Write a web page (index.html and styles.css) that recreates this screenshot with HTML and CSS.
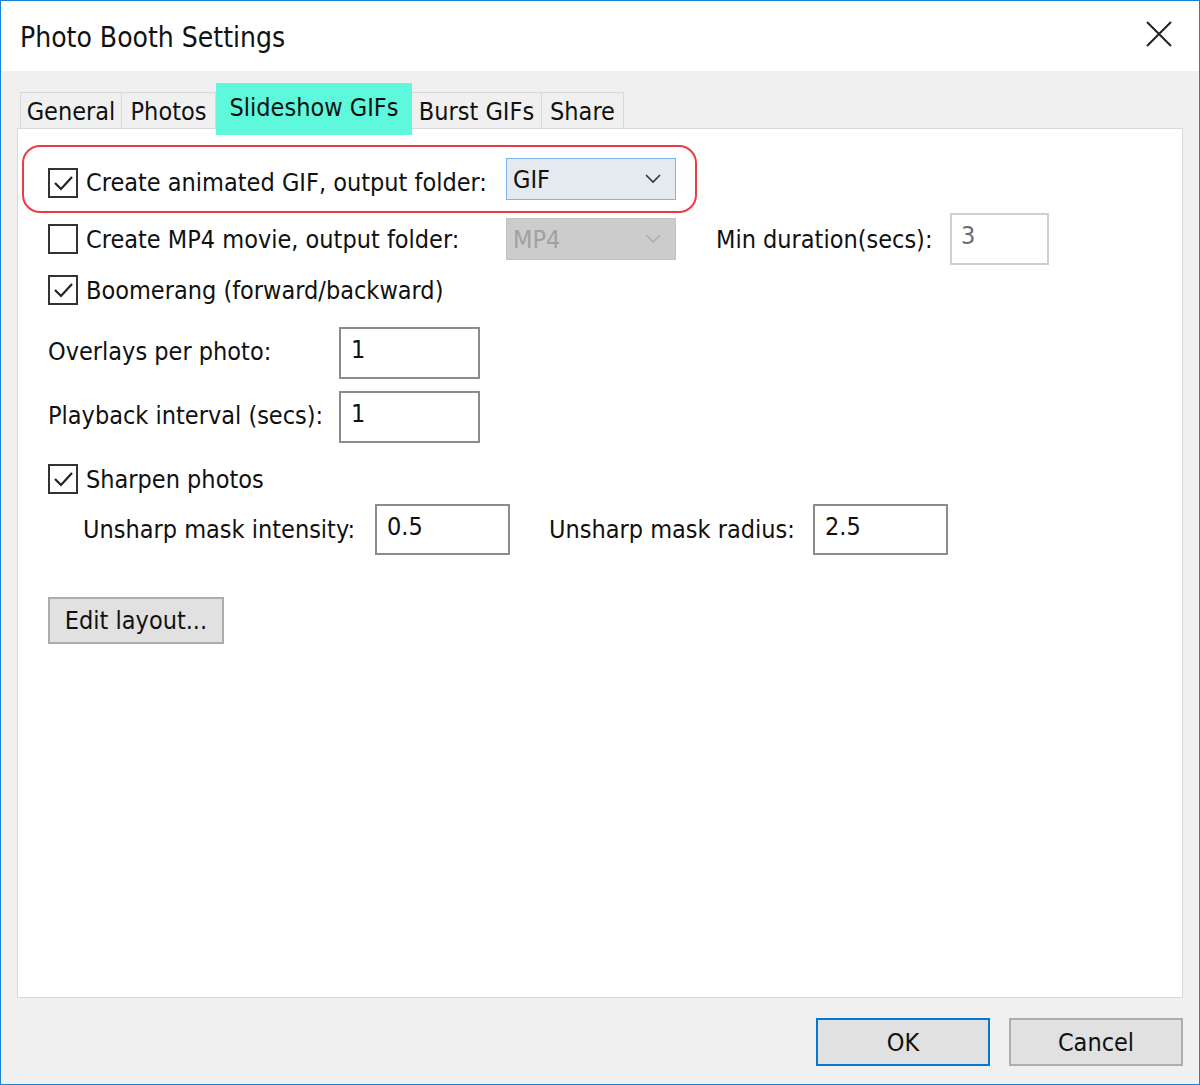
FILE: index.html
```html
<!DOCTYPE html>
<html lang="en">
<head>
    <meta charset="UTF-8">
    <meta name="viewport" content="width=device-width, initial-scale=1.0">
    <link rel="stylesheet" href="styles.css">
    <title>Photo Booth Settings</title>
</head>
<body>

<div class="window">
    <div class="titlebar">
        <span class="title">Photo Booth Settings</span>
        <svg class="close" width="28" height="28" viewBox="0 0 28 28">
            <path d="M2 2 L26 26 M26 2 L2 26" stroke="#222" stroke-width="2" fill="none"/>
        </svg>
    </div>

    <div class="content">
        <div class="tabs">
            <div class="tab tab-general">General</div>
            <div class="tab tab-photos">Photos</div>
            <div class="tab tab-active">Slideshow GIFs</div>
            <div class="tab tab-burst">Burst GIFs</div>
            <div class="tab tab-share">Share</div>
        </div>

        <div class="panel">
            <!-- fila marcada en rojo -->
            <div class="row row-marked">
                <div class="check checked">
                    <svg width="22" height="22" viewBox="0 0 22 22"><path d="M3 11 L9 17 L20 5" stroke="#222" stroke-width="2.2" fill="none"/></svg>
                </div>
                <div class="label label-folder">Create animated GIF, output folder:</div>
                <div class="combo">
                    <span>GIF</span>
                    <svg width="16" height="10" viewBox="0 0 16 10"><path d="M1 1 L8 8 L15 1" stroke="#333" stroke-width="1.6" fill="none"/></svg>
                </div>
            </div>

            <div class="row row-mp4">
                <div class="check"></div>
                <div class="label label-folder">Create MP4 movie, output folder:</div>
                <div class="combo combo-disabled">
                    <span>MP4</span>
                    <svg width="16" height="10" viewBox="0 0 16 10"><path d="M1 1 L8 8 L15 1" stroke="#b0b0b0" stroke-width="1.6" fill="none"/></svg>
                </div>
                <div class="label label-duration">Min duration(secs):</div>
                <div class="field field-disabled field-duration">3</div>
            </div>

            <div class="row row-boomerang">
                <div class="check checked">
                    <svg width="22" height="22" viewBox="0 0 22 22"><path d="M3 11 L9 17 L20 5" stroke="#222" stroke-width="2.2" fill="none"/></svg>
                </div>
                <div class="label">Boomerang (forward/backward)</div>
            </div>

            <div class="row row-field">
                <div class="label label-wide">Overlays per photo:</div>
                <div class="field field-num">1</div>
            </div>

            <div class="row row-field">
                <div class="label label-wide">Playback interval (secs):</div>
                <div class="field field-num">1</div>
            </div>

            <div class="row row-sharpen">
                <div class="check checked">
                    <svg width="22" height="22" viewBox="0 0 22 22"><path d="M3 11 L9 17 L20 5" stroke="#222" stroke-width="2.2" fill="none"/></svg>
                </div>
                <div class="label">Sharpen photos</div>
            </div>

            <div class="row row-unsharp">
                <div class="label label-intensity">Unsharp mask intensity:</div>
                <div class="field field-small">0.5</div>
                <div class="label label-radius">Unsharp mask radius:</div>
                <div class="field field-small">2.5</div>
            </div>

            <div class="button button-layout">Edit layout...</div>
        </div>

        <div class="footer">
            <div class="button button-ok">OK</div>
            <div class="button button-cancel">Cancel</div>
        </div>
    </div>
</div>

</body>
</html>
```

FILE: styles.css
```css
body {
    margin: 0;
    font-family: "DejaVu Sans Condensed", "DejaVu Sans", sans-serif;
    font-size: 25px;
    color: #111;
}

.window {
    width: 1200px;
    height: 1085px;
    box-sizing: border-box;
    border: 1px solid #1883d7;
    background-color: #f0f0f0;
    display: flex;
    flex-direction: column;
}

.titlebar {
    height: 70px;
    background-color: #fff;
    display: flex;
    align-items: center;
    justify-content: space-between;
    padding: 0 26px 0 19px;
}

.title {
    font-size: 28px;
    margin-top: 2px;
}

.close {
    margin-top: -4px;
}

.content {
    flex: 1;
    padding: 0 16px;
    display: flex;
    flex-direction: column;
}

/* pestañas */
.tabs {
    display: flex;
    align-items: flex-end;
    margin-top: 12px;
    padding-left: 3px;
    height: 45px;
}

.tab {
    height: 36px;
    box-sizing: border-box;
    border: 1px solid #d9d9d9;
    border-bottom: none;
    display: flex;
    align-items: center;
    justify-content: center;
    padding-top: 2px;
}

.tab-general { width: 102px; }
.tab-photos { width: 94px; border-left: none; }
.tab-burst { width: 130px; border-left: none; }
.tab-share { width: 82px; border-left: none; }

.tab-active {
    width: 196px;
    height: 52px;
    margin-bottom: -7px;
    background-color: #5ef8dc;
    border: none;
    position: relative;
    z-index: 1;
    padding: 0 0 4px 0;
}

.panel {
    height: 870px;
    box-sizing: border-box;
    background-color: #fff;
    border: 1px solid #d9d9d9;
    padding: 0 0 0 30px;
    display: flex;
    flex-direction: column;
    align-items: flex-start;
}

.row {
    display: flex;
    align-items: center;
}

.row-marked {
    margin: 16px 0 0 -26px;
    width: 675px;
    height: 68px;
    box-sizing: border-box;
    border: 2px solid #ec3c46;
    border-radius: 18px;
    padding-left: 24px;
}

.row-marked .check,
.row-marked .label {
    margin-top: 7px;
}

.row-mp4 {
    height: 52px;
}

.row-boomerang {
    height: 50px;
}

.row-field {
    margin-top: 12px;
}

.row-field .label {
    margin-top: -4px;
}

.row-sharpen {
    margin-top: 21px;
}

.row-unsharp {
    margin-top: 10px;
    padding-left: 35px;
}

.check {
    width: 30px;
    height: 30px;
    box-sizing: border-box;
    border: 2px solid #333;
    display: flex;
    align-items: center;
    justify-content: center;
    margin-right: 8px;
    flex-shrink: 0;
}

.label {
    white-space: nowrap;
}

.label-folder { width: 420px; }
.label-duration { width: 234px; margin-left: 40px; }
.label-wide { width: 291px; }
.label-intensity { width: 292px; }
.label-radius { width: 264px; margin-left: 39px; }

.combo {
    width: 170px;
    height: 42px;
    box-sizing: border-box;
    border: 1px solid #7eb4ea;
    background-color: #e5eaf0;
    display: flex;
    align-items: center;
    justify-content: space-between;
    padding: 0 14px 0 6px;
}

.combo-disabled {
    background-color: #cccccc;
    border-color: #c2c2c2;
    color: #a0a0a0;
}

.field {
    box-sizing: border-box;
    border: 2px solid #8c8c8c;
    background-color: #fff;
    padding: 6px 10px;
    height: 52px;
}

.field-num { width: 141px; }
.field-small { width: 135px; height: 51px; }

.field-disabled {
    border-color: #cfcfcf;
    color: #6d6d6d;
}

.field-duration { width: 99px; padding-left: 9px; }

.button {
    box-sizing: border-box;
    background-color: #e1e1e1;
    border: 2px solid #adadad;
    display: flex;
    align-items: center;
    justify-content: center;
}

.button-layout {
    margin-top: 42px;
    width: 176px;
    height: 47px;
}

.footer {
    display: flex;
    justify-content: flex-end;
    gap: 19px;
    margin-top: 20px;
}

.button-ok,
.button-cancel {
    width: 174px;
    height: 48px;
}

.button-ok {
    border-color: #0078d7;
}
```
